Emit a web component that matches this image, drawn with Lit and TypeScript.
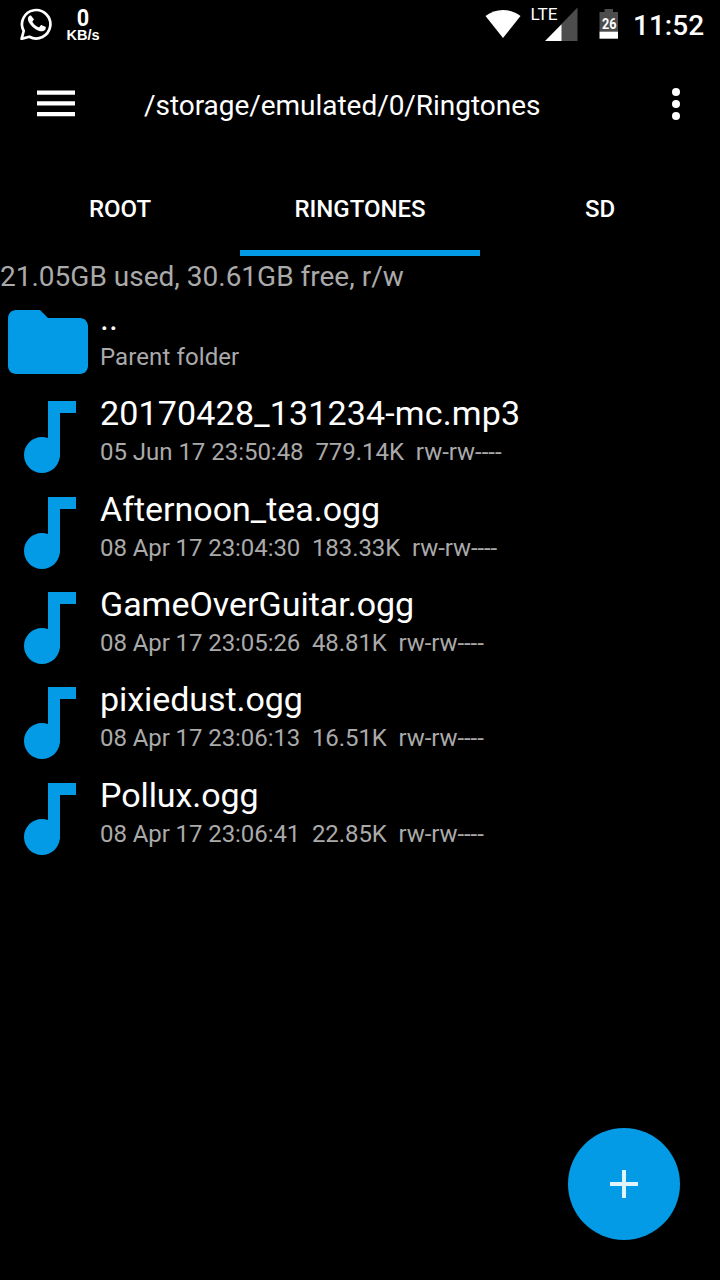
import { css, html, LitElement } from 'lit'
import { customElement, property } from 'lit/decorators.js'
import { styleMap } from 'lit/directives/style-map.js'

interface FileItem {
  name: string
  info: string
  type: string
  // letter spacing of the name and info lines, in px
  spacing: [number, number]
}

const files: FileItem[] = [
  { name: '..', info: 'Parent folder', type: 'folder', spacing: [0, 0.1] },
  { name: '20170428_131234-mc.mp3', info: '05 Jun 17 23:50:48  779.14K  rw-rw----', type: 'audio', spacing: [0.16, -0.03] },
  { name: 'Afternoon_tea.ogg', info: '08 Apr 17 23:04:30  183.33K  rw-rw----', type: 'audio', spacing: [-0.02, -0.08] },
  { name: 'GameOverGuitar.ogg', info: '08 Apr 17 23:05:26  48.81K  rw-rw----', type: 'audio', spacing: [-0.02, -0.08] },
  { name: 'pixiedust.ogg', info: '08 Apr 17 23:06:13  16.51K  rw-rw----', type: 'audio', spacing: [-0.06, -0.08] },
  { name: 'Pollux.ogg', info: '08 Apr 17 23:06:41  22.85K  rw-rw----', type: 'audio', spacing: [-0.08, -0.08] },
]

@customElement('status-bar')
export class StatusBar extends LitElement {
  render() {
    return html`
      <svg class="whatsapp" width="32" height="32" viewBox="0 0 32 32">
        <path d="M1.6 30.8 3.7 23A14.2 14.2 0 1 1 9.4 28.7Z" fill="none" stroke="#fff" stroke-width="2.7" stroke-linejoin="round" />
        <path
          d="M11.1 8.2c-.4-.8-.8-.8-1.3-.8-1.2 0-2.6 1.5-2.6 3.9 0 2.3 1.7 4.5 2 4.8.2.3 3.3 5.2 8.1 7.1 4 1.6 4.8 1.2 5.7 1.1.9-.1 2.8-1.1 3.1-2.2.4-1.1.4-2 .3-2.2-.2-.3-.5-.4-1-.6l-3.2-1.5c-.4-.2-.8-.2-1.1.2l-1.5 1.9c-.3.3-.5.4-1 .1-.5-.2-2-.7-3.8-2.3-1.4-1.3-2.4-2.8-2.6-3.3-.3-.5 0-.7.2-1l1.1-1.4c.2-.3.2-.5 0-.9z"
          fill="#fff"
          transform="translate(1.2 .6) scale(.93)"
        />
      </svg>
      <div class="speed">
        <span class="value">0</span>
        <span class="unit">KB/s</span>
      </div>
      <svg class="wifi" width="36" height="30" viewBox="0 0 36 30">
        <path d="M.5 7C10.5-1 25.5-1 35.5 7L18 29z" fill="#fff" />
      </svg>
      <svg class="signal" width="48" height="36" viewBox="0 0 48 36">
        <path d="M31 18.5 47.5 1.5V35H31z" fill="#4d4d4d" />
        <path d="M15 35 31.5 18.3V35z" fill="#fff" />
        <text x="0.5" y="13.5" textLength="27" lengthAdjust="spacingAndGlyphs">LTE</text>
      </svg>
      <svg class="battery" width="20" height="30" viewBox="0 0 20 30">
        <path d="M.5 3H5.5V0H14V3H19V23H.5z" fill="#4d4d4d" />
        <path d="M.5 22.7H19V29.7H.5z" fill="#fff" />
        <text x="3" y="20" textLength="14.5" lengthAdjust="spacingAndGlyphs">26</text>
      </svg>
      <span class="clock">11:52</span>
    `
  }

  static styles = css`
    :host {
      display: flex;
      align-items: flex-start;
      height: 48px;
      box-sizing: border-box;
      padding: 0 16px 0 20px;
      color: #fff;
      font-family: Roboto, sans-serif;
    }

    svg {
      display: block;
      flex: none;
    }

    .whatsapp {
      margin-top: 8px;
    }

    .speed {
      display: flex;
      flex-direction: column;
      align-items: center;
      width: 34px;
      margin: 7px 0 0 14px;
      font-weight: 700;
    }

    .value {
      font-size: 24px;
      line-height: 22px;
      transform: scaleX(0.9);
    }

    .unit {
      font-family: 'Liberation Sans', sans-serif;
      font-size: 14.5px;
      line-height: 13px;
    }

    .wifi {
      margin: 9px 0 0 auto;
    }

    .signal {
      margin: 6px 0 0 9px;
    }

    .signal text {
      font-size: 16px;
      fill: #fff;
    }

    .battery {
      margin: 9px 0 0 21px;
    }

    .battery text {
      font-size: 15px;
      font-weight: 700;
      fill: #fff;
    }

    .clock {
      width: 71px;
      margin: 9px 0 0 14px;
      font-size: 28px;
      font-weight: 500;
      line-height: 33px;
    }
  `
}

@customElement('file-row')
export class FileRow extends LitElement {
  @property({ type: Object })
  file: FileItem = files[0]

  renderIcon() {
    if (this.file.type === 'folder') {
      return html`
        <svg viewBox="0 0 24 24">
          <path d="M10 4H4c-1.1 0-1.99.9-1.99 2L2 18c0 1.1.9 2 2 2h16c1.1 0 2-.9 2-2V8c0-1.1-.9-2-2-2h-8l-2-2z" />
        </svg>
      `
    }
    return html`
      <svg viewBox="0 0 24 24">
        <path d="M12 3v9.28c-.47-.17-.97-.28-1.5-.28C8.01 12 6 14.01 6 16.5S8.01 21 10.5 21c2.31 0 4.2-1.75 4.45-4H15V6h4V3h-7z" />
      </svg>
    `
  }

  render() {
    const { name, info, spacing } = this.file
    return html`
      ${this.renderIcon()}
      <div class="text">
        <div class="name" style=${styleMap({ letterSpacing: `${spacing[0]}px` })}>${name}</div>
        <div class="info" style=${styleMap({ letterSpacing: `${spacing[1]}px` })}>${info}</div>
      </div>
    `
  }

  static styles = css`
    :host {
      display: flex;
      height: 95.33px;
      font-family: Roboto, sans-serif;
    }

    svg {
      flex: none;
      width: 96px;
      height: 96px;
      fill: #039be5;
    }

    .text {
      padding: 4px 0 0 4px;
    }

    .name {
      color: #fff;
      font-size: 34px;
      line-height: 41px;
      white-space: pre;
    }

    .info {
      color: #aaa;
      font-size: 24px;
      line-height: 36.5px;
      white-space: pre;
    }
  `
}

@customElement('app-root')
export class AppRoot extends LitElement {
  render() {
    return html`
      <status-bar></status-bar>
      <header>
        <svg width="38" height="28" viewBox="0 0 38 28">
          <path d="M0 .4h38v4.3H0zM0 11.2h38v4.3H0zM0 22h38v4.3H0z" fill="#fff" />
        </svg>
        <div class="path">/storage/emulated/0/Ringtones</div>
        <svg width="8" height="32" viewBox="0 0 8 32">
          <circle cx="4" cy="4" r="4" fill="#fff" />
          <circle cx="4" cy="16" r="4" fill="#fff" />
          <circle cx="4" cy="28" r="4" fill="#fff" />
        </svg>
      </header>
      <nav>
        <div class="tab">ROOT</div>
        <div class="tab active">RINGTONES</div>
        <div class="tab">SD</div>
      </nav>
      <div class="usage">21.05GB used, 30.61GB free, r/w</div>
      <main>
        ${files.map(f => html`<file-row .file=${f}></file-row>`)}
      </main>
      <button class="fab" aria-label="Add">
        <svg width="28" height="28" viewBox="0 0 28 28">
          <path d="M12 0h4v12h12v4H16v12h-4V16H0v-4h12z" fill="#e1f3fc" />
        </svg>
      </button>
    `
  }

  static styles = css`
    :host {
      display: flex;
      flex-direction: column;
      position: relative;
      width: 720px;
      height: 1280px;
      overflow: hidden;
      background: #000;
      color: #fff;
      font-family: Roboto, sans-serif;
    }

    header {
      display: flex;
      align-items: center;
      height: 112px;
      box-sizing: border-box;
      padding: 0 40px 0 37px;
    }

    .path {
      flex: 1;
      padding: 3px 0 0 69px;
      font-size: 28px;
      letter-spacing: -0.04px;
      line-height: 34px;
    }

    nav {
      display: grid;
      grid-template-columns: repeat(3, 1fr);
      height: 96px;
    }

    .tab {
      box-sizing: border-box;
      padding-top: 35px;
      border-bottom: 6px solid transparent;
      font-size: 24px;
      font-weight: 500;
      line-height: 28px;
      text-align: center;
    }

    .tab.active {
      border-color: #039be5;
    }

    .usage {
      height: 38px;
      color: #aaa;
      font-size: 28px;
      line-height: 41px;
    }

    .fab {
      display: flex;
      align-items: center;
      justify-content: center;
      position: absolute;
      right: 40px;
      bottom: 40px;
      width: 112px;
      height: 112px;
      padding: 0;
      border: none;
      border-radius: 50%;
      background: #039be5;
    }
  `
}
